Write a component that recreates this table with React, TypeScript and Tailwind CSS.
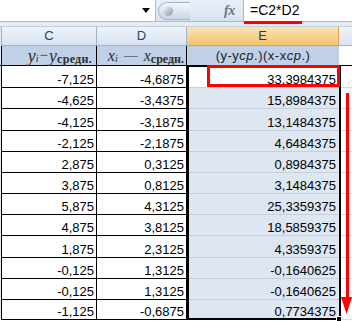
import React from "react";

const rows: [string, string, string][] = [
  ["-7,125", "-4,6875", "33,3984375"],
  ["-4,625", "-3,4375", "15,8984375"],
  ["-4,125", "-3,1875", "13,1484375"],
  ["-2,125", "-2,1875", "4,6484375"],
  ["2,875", "0,3125", "0,8984375"],
  ["3,875", "0,8125", "3,1484375"],
  ["5,875", "4,3125", "25,3359375"],
  ["4,875", "3,8125", "18,5859375"],
  ["1,875", "2,3125", "4,3359375"],
  ["-0,125", "1,3125", "-0,1640625"],
  ["-0,125", "1,3125", "-0,1640625"],
  ["-1,125", "-0,6875", "0,7734375"],
];

const heights = ["h-[22px]", "h-[21px]", "h-[22px]", "h-[21px]", "h-[21px]", "h-[21px]", "h-[21px]", "h-[21px]", "h-[22px]", "h-[21px]", "h-[21px]", "h-[20px]"];

export default function App() {
  return (
    <div className="relative w-[352px] h-[321px] overflow-hidden bg-white font-['Liberation_Sans',Arial,sans-serif] text-[13px] text-black">
      {/* formula bar */}
      <div className="flex h-[21px] bg-gradient-to-b from-[#e9eff7] to-[#d9e3f0]">
        <div className="w-[156px] bg-white border-r border-[#a9b9cd] flex items-center justify-end pr-[5px]">
          <svg width="8" height="5" viewBox="0 0 8 5">
            <path d="M0 0 H8 L4 5 Z" fill="#000" />
          </svg>
        </div>
        <div className="w-[87px] flex items-center">
          <div className="ml-[2px] w-[32px] h-[18px] rounded-l-full bg-gradient-to-b from-[#f4f7fb] to-[#c9d6e6] border border-[#9fb2c9] border-r-0 flex items-center pl-[4px]">
            <div className="w-[10px] h-[10px] rounded-full bg-gradient-to-br from-[#fdfdfd] to-[#8c96a3]" />
          </div>
          <span className="ml-[34px] font-['Liberation_Serif',serif] italic text-[14px] text-[#6b7684] font-bold tracking-[-0.5px]">fx</span>
        </div>
        <div className="flex-1 bg-white border-l border-[#a9b9cd] flex items-center pl-[6px] text-[14px]">
          =C2*D2
        </div>
      </div>
      {/* band */}
      <div className="h-[6px] bg-[#e6ecf4] border-t border-[#a9b9cd] border-b border-b-[#c2cfdf]" />
      {/* column headers */}
      <div className="flex h-[19px] text-[13px] text-[#26456b]">
        <div className="w-[2px] bg-[#dfe7f2] border-r border-[#9fb4cc]" />
        <div className="w-[95px] bg-gradient-to-b from-[#eef3f9] to-[#d9e3f0] border-r border-[#9fb4cc] border-b border-b-[#9fb4cc] flex items-center justify-center">C</div>
        <div className="w-[90px] bg-gradient-to-b from-[#eef3f9] to-[#d9e3f0] border-r border-[#9fb4cc] border-b border-b-[#9fb4cc] flex items-center justify-center">D</div>
        <div className="w-[152px] bg-gradient-to-b from-[#fbe3b4] to-[#f5c26e] border-r border-[#e3a24b] border-b border-b-[#f29b38] flex items-center justify-center text-[#3a3a3a]">E</div>
        <div className="flex-1 bg-gradient-to-b from-[#eef3f9] to-[#d9e3f0] border-b border-[#9fb4cc]" />
      </div>
      {/* label row */}
      <div className="flex h-[20px] border-b border-black">
        <div className="w-[2px] bg-[#dfe7f2] border-r border-black" />
        <div className="w-[95px] bg-[#bfd0e7] border-r border-black flex items-center justify-end pr-[4px] font-['Liberation_Serif',serif] text-[#2e2e2e] leading-none">
          <span className="italic text-[18px]">y</span>
          <span className="italic text-[10px] mt-[7px]">i</span>
          <span className="text-[15px] mx-[1px]">−</span>
          <span className="italic text-[18px]">y</span>
          <span className="text-[12px] font-bold mt-[6px] tracking-[0.3px]">средн.</span>
        </div>
        <div className="w-[90px] bg-[#bfd0e7] border-r border-black flex items-center justify-end pr-[2px] font-['Liberation_Serif',serif] text-[#2e2e2e] leading-none">
          <span className="italic text-[16px]">x</span>
          <span className="italic text-[10px] mt-[7px]">i</span>
          <span className="text-[14px] mx-[6px]">—</span>
          <span className="italic text-[16px]">x</span>
          <span className="text-[12px] font-bold mt-[6px]">средн.</span>
        </div>
        <div className="w-[152px] bg-[#bfd0e7] flex items-center justify-center tracking-[0.5px] text-[#1b1b1b]">
          (y-y<i>ср</i>.)(x-x<i>ср</i>.)
        </div>
        <div className="flex-1 bg-white" />
      </div>
      {/* data rows */}
      {rows.map((r, i) => (
        <div key={i} className={`flex ${heights[i]}`}>
          <div className="w-[2px] bg-[#dfe7f2] border-r border-black" />
          <div className="w-[95px] border-r border-b border-black flex items-end justify-end pr-[2px] pb-[1px] leading-[13px]">{r[0]}</div>
          <div className="w-[90px] border-r border-b border-black flex items-end justify-end pr-[2px] pb-[1px] leading-[13px]">{r[1]}</div>
          <div className={`w-[152px] border-b ${i === 0 ? "bg-white border-[#c6cfdc]" : "bg-[#dee6f2] border-[#c6cfdc]"} flex items-end justify-end pr-[3px] pb-[1px] leading-[13px]`}>{r[2]}</div>
          <div className="flex-1 bg-white border-b border-[#d4dae4]" />
        </div>
      ))}
      {/* selection border */}
      <div className="absolute left-[187px] top-[65px] w-[154px] h-[255px] border-2 border-black pointer-events-none" />
      <div className="absolute left-[336px] top-[316px] w-[6px] h-[6px] bg-black border border-white" />
      {/* annotations */}
      <div className="absolute left-[207px] top-[65px] w-[133px] h-[22px] border-[3px] border-[#ff0000]" />
      <div className="absolute left-[244px] top-[21px] w-[58px] h-[3px] bg-[#ff0000]" />
      <div className="absolute left-[346px] top-[93px] w-[3px] h-[207px] bg-[#ff0000]" />
      <svg className="absolute left-[341px] top-[297px]" width="11" height="17" viewBox="0 0 11 17">
        <path d="M0 0 H11 L5.5 17 Z" fill="#ff0000" />
      </svg>
    </div>
  );
}
